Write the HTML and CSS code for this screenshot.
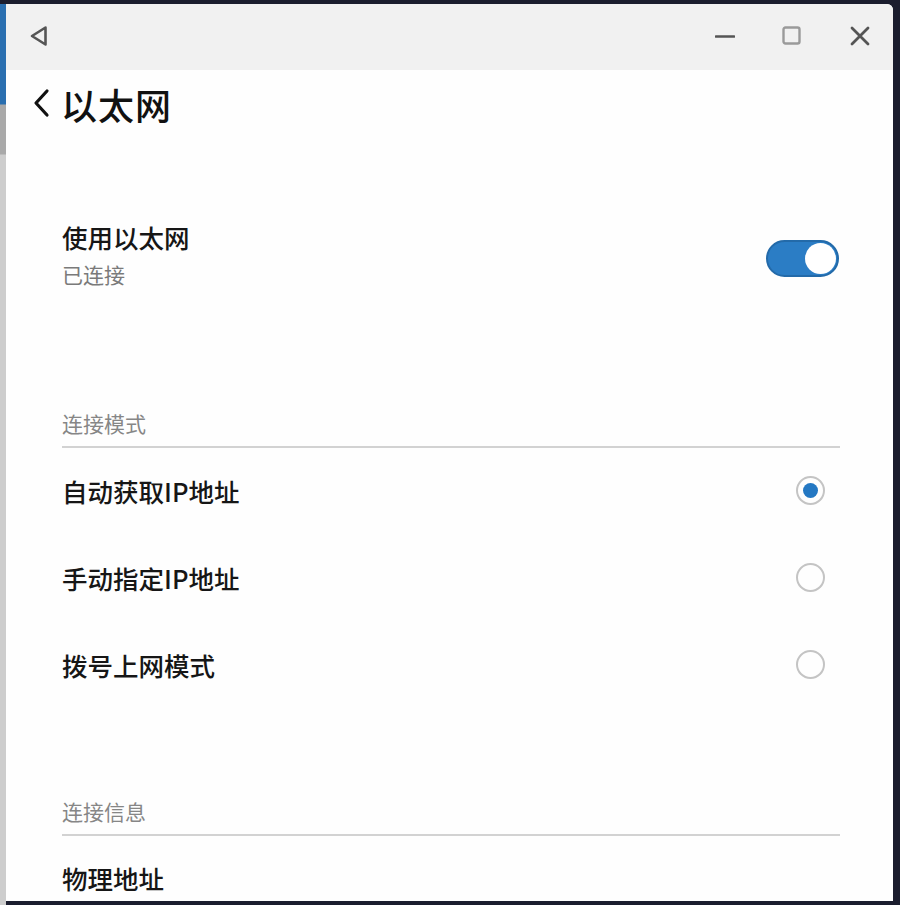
FILE: index.html
```html
<!DOCTYPE html>
<html lang="zh-CN">
<head>
<meta charset="utf-8">
<title>以太网</title>
<link rel="stylesheet" href="styles.css">
</head>
<body>
<div class="desktop">
  <div class="side-strip"></div>
  <div class="window">
    <div class="titlebar">
      <svg class="tb-back" width="20" height="22" viewBox="0 0 20 22"><path d="M16.5 2.5 L3 11 L16.5 19.5 Z" fill="none" stroke="#555" stroke-width="2.6" stroke-linejoin="round"/></svg>
      <div class="tb-controls">
        <svg width="20" height="20" viewBox="0 0 20 20"><path d="M1 10.5 H19" stroke="#555" stroke-width="2.6" stroke-linecap="round"/></svg>
        <svg width="20" height="20" viewBox="0 0 20 20"><rect x="1.5" y="1.5" width="16" height="16" rx="2" fill="none" stroke="#9a9a9a" stroke-width="2.4"/></svg>
        <svg width="22" height="22" viewBox="0 0 22 22"><path d="M3 3 L19 19 M19 3 L3 19" stroke="#555" stroke-width="2.8" stroke-linecap="round"/></svg>
      </div>
    </div>
    <div class="page-head">
      <svg class="chevron" width="18" height="30" viewBox="0 0 18 30"><path d="M15 3 L4 15 L15 27" fill="none" stroke="#111" stroke-width="3.2" stroke-linecap="round" stroke-linejoin="round"/></svg>
      <h1>以太网</h1>
    </div>
    <div class="content">
      <div class="switch-row">
        <div class="switch-text">
          <div class="item-title">使用以太网</div>
          <div class="item-sub">已连接</div>
        </div>
        <div class="toggle on"><span class="knob"></span></div>
      </div>

      <div class="section-label first">连接模式</div>
      <div class="radio-group">
        <div class="radio-row"><span class="item-title">自动获取IP地址</span><span class="radio checked"></span></div>
        <div class="radio-row"><span class="item-title">手动指定IP地址</span><span class="radio"></span></div>
        <div class="radio-row"><span class="item-title">拨号上网模式</span><span class="radio"></span></div>
      </div>

      <div class="section-label second">连接信息</div>
      <div class="info-row"><span class="item-title">物理地址</span></div>
    </div>
  </div>
</div>
</body>
</html>
```
FILE: styles.css
```css
html, body {
  margin: 0;
  padding: 0;
  background: #1b1d2e;
  font-family: "Noto Sans CJK SC", "Noto Sans", sans-serif;
}

.desktop {
  width: 900px;
  height: 905px;
  display: flex;
  padding-top: 4px;
  box-sizing: border-box;
  overflow: hidden;
}

/* sliver of the neighbouring window on the left */
.side-strip {
  width: 6px;
  flex: none;
  background: linear-gradient(#2a6fb0 0, #2a6fb0 100px, #a9a9a9 101px, #a9a9a9 150px, #cdcdcd 151px, #cdcdcd 100%);
}

.window {
  width: 887px;
  height: 897px;
  background: #fefefe;
  border-top-right-radius: 6px;
  overflow: hidden;
  display: flex;
  flex-direction: column;
}

.titlebar {
  height: 66px;
  flex: none;
  background: #f1f1f1;
  display: flex;
  align-items: center;
  padding: 0 22px 0 23px;
  box-sizing: border-box;
}

.tb-back { margin-top: -2px; }

.tb-controls {
  margin-left: auto;
  display: flex;
  align-items: center;
  gap: 47px;
  margin-top: -2px;
}

.page-head {
  height: 68px;
  flex: none;
  display: flex;
  align-items: center;
  padding-left: 26px;
  gap: 11px;
}

.page-head h1 {
  margin: 0;
  font-size: 36px;
  font-weight: 500;
  color: #111;
  line-height: 44px;
  letter-spacing: 1px;
}

.chevron { margin-top: -2px; }

.content {
  padding: 0 53px 0 56px;
}

.switch-row {
  display: flex;
  align-items: center;
  justify-content: space-between;
  margin-top: 83px;
}

.switch-text {
  display: flex;
  flex-direction: column;
  gap: 7px;
}

.item-title {
  font-size: 25.5px;
  font-weight: 500;
  color: #161616;
  line-height: 32px;
}

.item-sub {
  font-size: 21px;
  color: #7a7a7a;
  line-height: 28px;
}

.toggle {
  width: 73px;
  height: 37px;
  border-radius: 19px;
  background: #2b7dc5;
  box-sizing: border-box;
  border: 2px solid #236aa9;
  position: relative;
  margin-top: 7px;
  margin-right: 1px;
}

.toggle .knob {
  position: absolute;
  right: 1px;
  top: 1px;
  width: 31px;
  height: 31px;
  border-radius: 50%;
  background: #fff;
}

.section-label {
  font-size: 21px;
  color: #868686;
  line-height: 28px;
  padding-bottom: 9px;
  border-bottom: 2px solid #d2d2d2;
}

.section-label.first { margin-top: 121px; }
.section-label.second { margin-top: 89px; }

.radio-group {
  margin-top: -1px;
}

.radio-row {
  display: flex;
  align-items: center;
  justify-content: space-between;
  height: 87px;
  padding-right: 15px;
}

.radio {
  width: 29px;
  height: 29px;
  border-radius: 50%;
  border: 2px solid #c4c4c4;
  box-sizing: border-box;
  position: relative;
}

.radio.checked::after {
  content: "";
  position: absolute;
  left: 50%;
  top: 50%;
  width: 15px;
  height: 15px;
  margin: -7.5px 0 0 -7.5px;
  border-radius: 50%;
  background: #2478c3;
}

.info-row {
  margin-top: 26px;
}
```
